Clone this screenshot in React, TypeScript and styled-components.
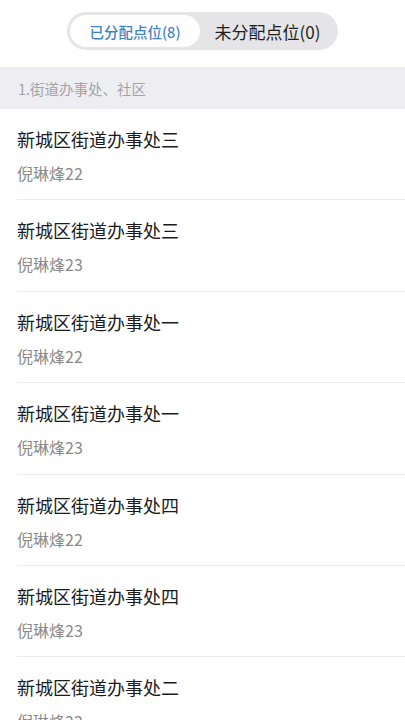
import React, { useState } from "react";
import styled, { createGlobalStyle } from "styled-components";

const GlobalStyle = createGlobalStyle`
  html, body {
    margin: 0;
    padding: 0;
    background: #ffffff;
    font-family: "Noto Sans CJK SC", "Noto Sans", sans-serif;
  }
`;

const Page = styled.div`
  width: 405px;
  height: 720px;
  overflow: hidden;
  background: #ffffff;
`;

const TopBar = styled.div`
  height: 67px;
  display: flex;
  justify-content: center;
  padding-top: 12px;
  box-sizing: border-box;
`;

const Segmented = styled.div`
  display: flex;
  align-items: center;
  width: 271px;
  height: 38px;
  padding: 3px;
  box-sizing: border-box;
  background: #e5e5e7;
  border-radius: 19px;
`;

const SegButton = styled.div<{ $active: boolean }>`
  height: 32px;
  border-radius: 16px;
  display: flex;
  align-items: center;
  justify-content: center;
  box-sizing: border-box;
  width: ${(p) => (p.$active ? "130px" : "auto")};
  flex: ${(p) => (p.$active ? "0 0 auto" : "1")};
  background: ${(p) => (p.$active ? "#ffffff" : "transparent")};
  color: ${(p) => (p.$active ? "#3f84c6" : "#1f1f1f")};
  font-size: ${(p) => (p.$active ? "14.5px" : "17px")};
  font-weight: ${(p) => (p.$active ? 500 : 400)};
  cursor: pointer;
`;

const GroupHeader = styled.div`
  height: 42px;
  display: flex;
  align-items: center;
  padding-left: 18px;
  background: #eeeef2;
  color: #a3a3a8;
  font-size: 14.5px;
`;

const Row = styled.div`
  margin-left: 17px;
  padding: 18px 0 16.4px;
  border-bottom: 1px solid #ececec;
  display: flex;
  flex-direction: column;
  gap: 12px;
`;

const Title = styled.div`
  font-size: 18px;
  line-height: 24px;
  color: #1b1b1b;
`;

const Sub = styled.div`
  font-size: 16px;
  line-height: 20px;
  color: #8a8a8a;
`;

const rows = [
  { name: "新城区街道办事处三", person: "倪琳烽22" },
  { name: "新城区街道办事处三", person: "倪琳烽23" },
  { name: "新城区街道办事处一", person: "倪琳烽22" },
  { name: "新城区街道办事处一", person: "倪琳烽23" },
  { name: "新城区街道办事处四", person: "倪琳烽22" },
  { name: "新城区街道办事处四", person: "倪琳烽23" },
  { name: "新城区街道办事处二", person: "倪琳烽22" },
  { name: "新城区街道办事处二", person: "倪琳烽23" },
];

const App: React.FC = () => {
  const [tab, setTab] = useState(0);

  return (
    <Page>
      <GlobalStyle />
      <TopBar>
        <Segmented>
          <SegButton $active={tab === 0} onClick={() => setTab(0)}>
            已分配点位(8)
          </SegButton>
          <SegButton $active={tab === 1} onClick={() => setTab(1)}>
            未分配点位(0)
          </SegButton>
        </Segmented>
      </TopBar>
      <GroupHeader>1.街道办事处、社区</GroupHeader>
      {rows.map((r, i) => (
        <Row key={i}>
          <Title>{r.name}</Title>
          <Sub>{r.person}</Sub>
        </Row>
      ))}
    </Page>
  );
};

export default App;
